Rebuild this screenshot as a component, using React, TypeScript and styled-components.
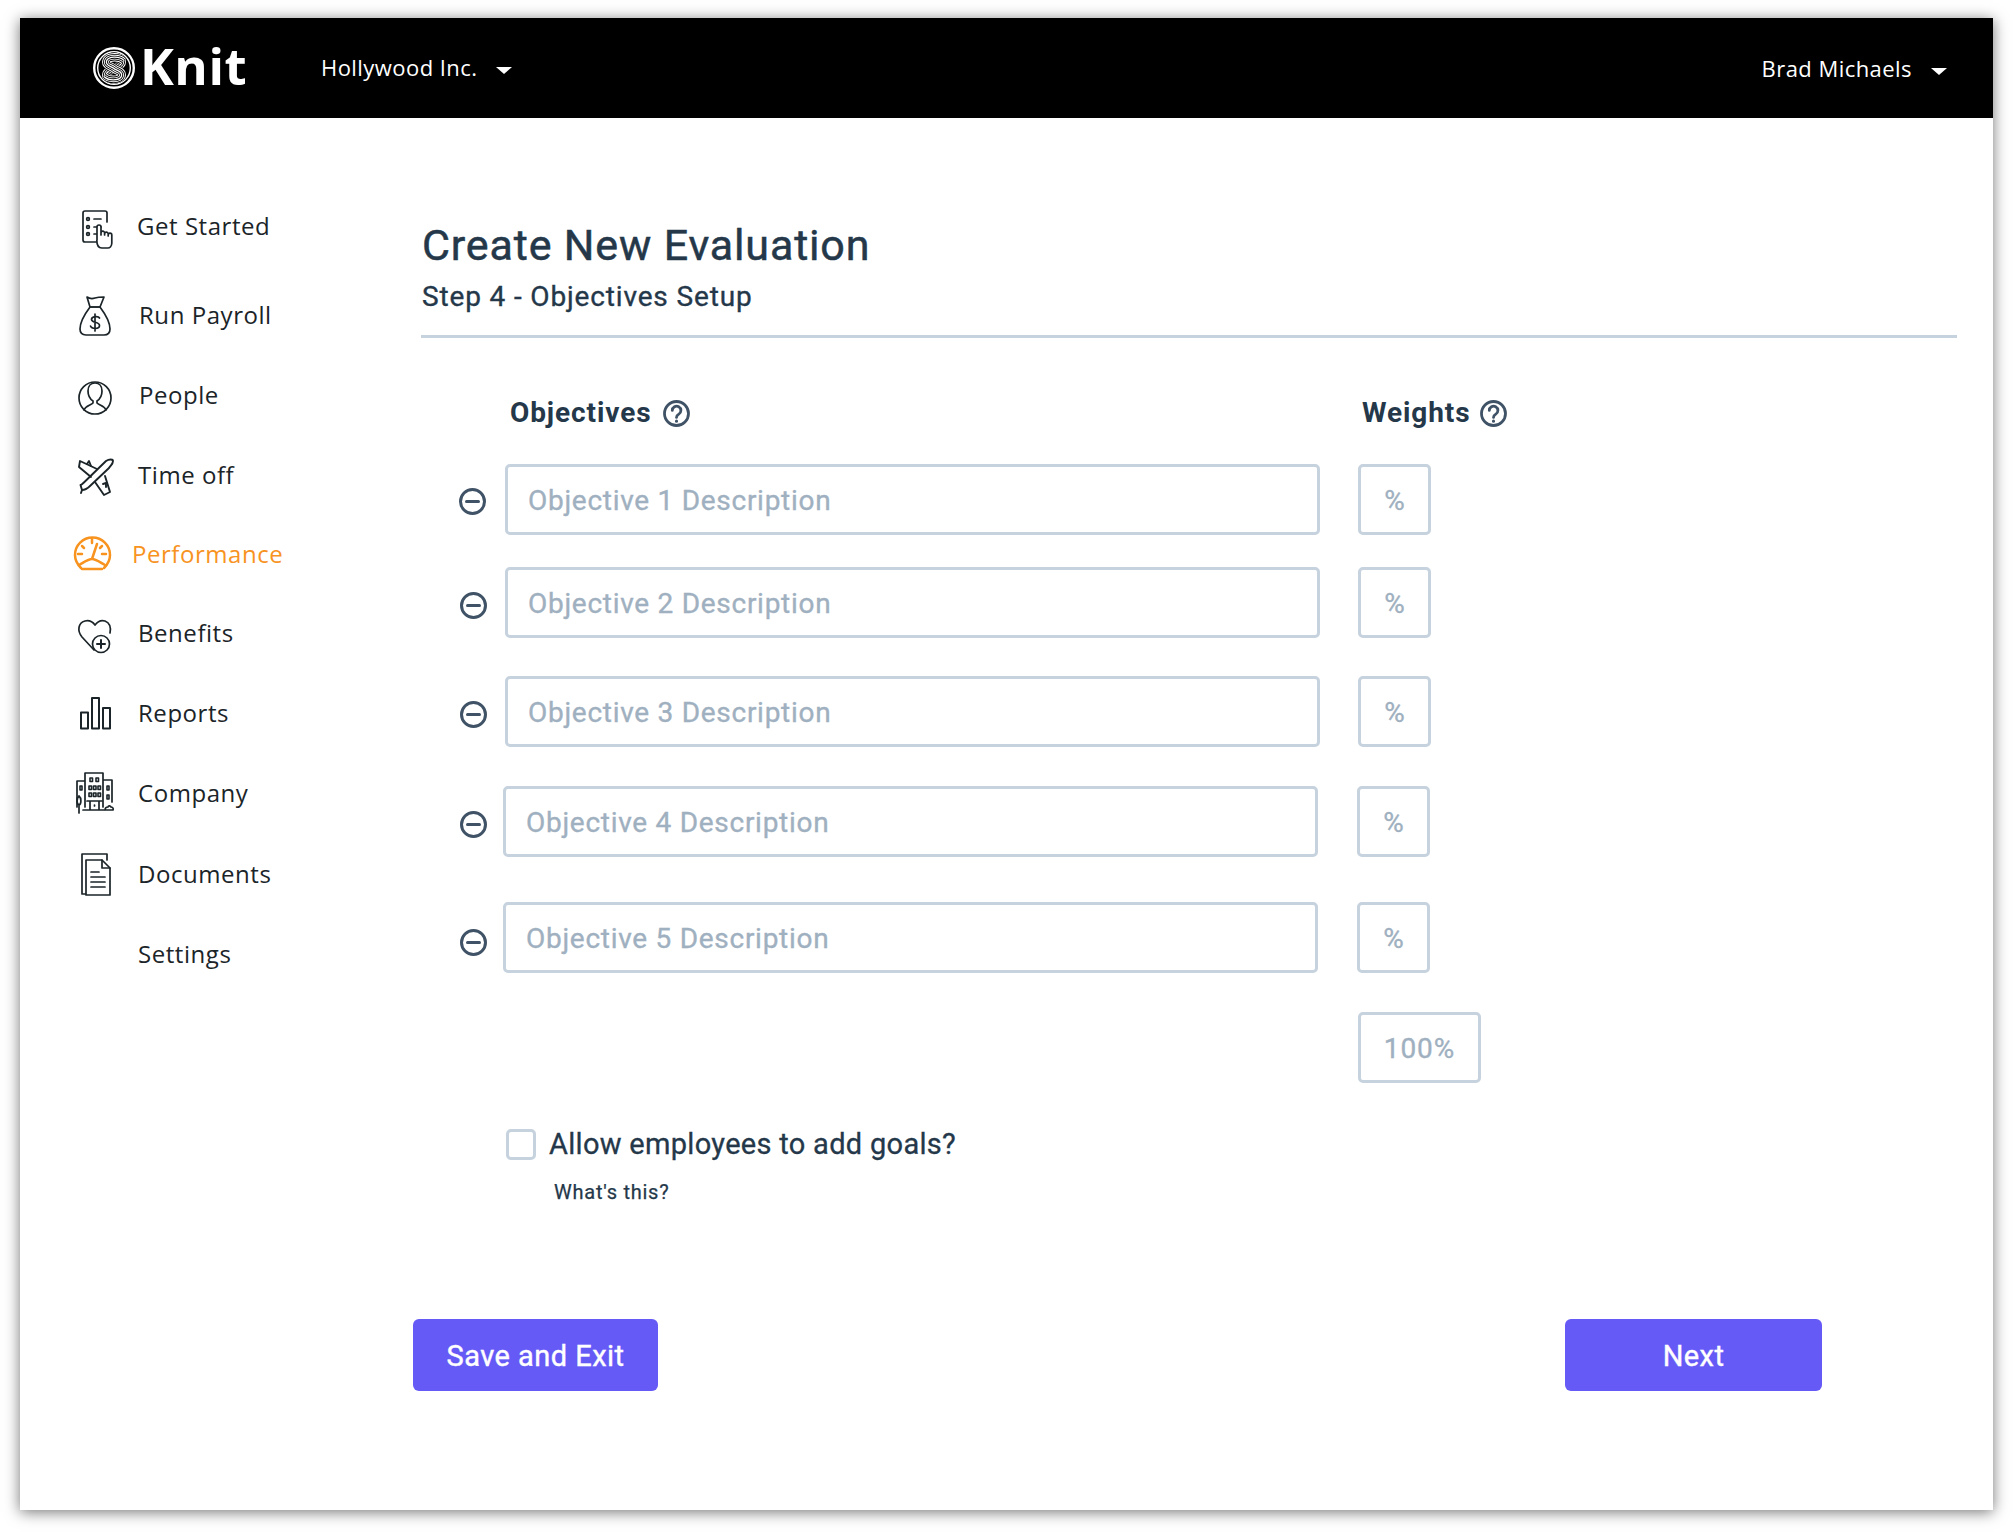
import React from "react";
import styled, { createGlobalStyle } from "styled-components";

const ink = "#1b2428";
const slate = "#24384a";
const line = "#c6d2de";
const hint = "#9fb0c0";
const din = `Roboto, "Liberation Sans", sans-serif`;
const open = `"Open Sans", "Noto Sans", sans-serif`;

const Global = createGlobalStyle`
  html, body { margin: 0; padding: 0; background: #fff; }
  body { font-family: ${din}; }
  * { box-sizing: border-box; }
`;

const Page = styled.div`
  width: 2013px;
  height: 1532px;
  padding: 18px 20px 22px;
  overflow: hidden;
`;
const Win = styled.div`
  height: 1492px;
  background: #fff;
  box-shadow: 0 2px 14px rgba(0, 0, 0, 0.55);
  display: flex;
  flex-direction: column;
`;
const TopBar = styled.header`
  height: 100px;
  flex: none;
  background: #000;
  color: #fff;
  display: flex;
  align-items: center;
  padding: 0 46px 0 73px;
  font-family: ${open};
`;
const Brand = styled.div`
  display: flex;
  align-items: center;
  gap: 5px;
  width: 228px;
`;
const BrandName = styled.span`
  font: 700 51px/1 ${open};
  letter-spacing: 0.5px;
  margin-top: -5px;
`;
const Menu = styled.div<{ $gap: number; $up?: number }>`
  display: flex;
  align-items: center;
  gap: ${(p) => p.$gap}px;
  font-size: 22px;
  letter-spacing: 0.45px;
  margin-bottom: ${(p) => p.$up ?? 0}px;
`;
const Caret = styled.i`
  width: 0;
  height: 0;
  border-left: 8px solid transparent;
  border-right: 8px solid transparent;
  border-top: 7px solid #fff;
  margin-top: 6px;
`;
const Spacer = styled.div`
  flex: 1;
`;
const Body = styled.div`
  flex: 1;
  display: flex;
`;
const Side = styled.nav`
  width: 401px;
  flex: none;
  padding: 84px 0 0 54px;
`;
const NavRow = styled.div<{ $gap: number; $active?: boolean }>`
  height: 48px;
  margin-top: ${(p) => p.$gap}px;
  display: flex;
  align-items: center;
  font: 400 24px/1 ${open};
  letter-spacing: 0.55px;
  color: ${(p) => (p.$active ? "#f7931e" : ink)};
`;
const NavIcon = styled.svg<{ $space: number }>`
  width: 40px;
  height: 48px;
  flex: none;
  margin-right: ${(p) => p.$space}px;
  overflow: visible;
  fill: none;
  stroke: currentColor;
  stroke-width: 1.7;
  stroke-linecap: round;
  stroke-linejoin: round;
`;
const Main = styled.main`
  flex: 1;
  padding: 98px 36px 0 0;
`;
const Title = styled.h1`
  margin: 0;
  padding-left: 1px;
  font: 400 43px/58px ${din};
  -webkit-text-stroke: 0.5px ${slate};
  color: ${slate};
  letter-spacing: 0.85px;
`;
const Sub = styled.h2`
  margin: 5px 0 0;
  padding: 0 0 20px 1px;
  font: 400 28px/36px ${din};
  -webkit-text-stroke: 0.35px ${slate};
  color: ${slate};
  letter-spacing: 0.85px;
  border-bottom: 3px solid ${line};
`;
const Form = styled.div`
  padding-left: 38px;
`;
const HeadRow = styled.div`
  height: 40px;
  margin-top: 55px;
  display: flex;
  align-items: center;
  font: 700 28px/1 ${din};
  letter-spacing: 0.9px;
  color: ${slate};
`;
const HeadCell = styled.div<{ $w: number; $x: number; $gap: number }>`
  width: ${(p) => p.$w}px;
  padding-left: ${(p) => p.$x}px;
  display: flex;
  align-items: center;
  gap: ${(p) => p.$gap}px;
`;
const Row = styled.div<{ $gap: number }>`
  display: flex;
  align-items: center;
  height: 71px;
  margin-top: ${(p) => p.$gap}px;
`;
const Ico = styled.svg`
  width: 27px;
  height: 27px;
  flex: none;
  fill: none;
  stroke: #3f5266;
  stroke-width: 2.8;
  stroke-linecap: round;
`;
const MinusSlot = styled.div<{ $w: number; $left: number; $top: number }>`
  width: ${(p) => p.$w}px;
  flex: none;
  display: flex;
  padding: ${(p) => p.$top}px 0 0 ${(p) => p.$left}px;
`;
const Field = styled.div`
  width: 815px;
  height: 71px;
  flex: none;
  border: 3px solid ${line};
  border-radius: 5px;
  display: flex;
  align-items: center;
  padding: 3px 20px 0;
  font: 400 28px/1 ${din};
  -webkit-text-stroke: 0.35px ${hint};
  letter-spacing: 0.72px;
  color: ${hint};
`;
const Weight = styled.div<{ $w?: number; $gap: number; $wide?: boolean }>`
  width: ${(p) => p.$w ?? 73}px;
  height: 71px;
  flex: none;
  margin-left: ${(p) => p.$gap}px;
  border: 3px solid ${line};
  border-radius: 5px;
  display: flex;
  align-items: center;
  justify-content: center;
  padding-top: 3px;
  font: 400 28px/1 ${din};
  -webkit-text-stroke: 0.35px ${hint};
  letter-spacing: ${(p) => (p.$wide ? "1px" : "0")};
  color: ${hint};
`;
const Check = styled.div`
  display: flex;
  align-items: center;
  gap: 13px;
  margin: 45px 0 0 47px;
  height: 32px;
  font: 400 29px/1 ${din};
  -webkit-text-stroke: 0.3px ${slate};
  letter-spacing: 0.3px;
  color: ${slate};
`;
const Box = styled.span`
  width: 30px;
  height: 31px;
  border: 3px solid ${line};
  border-radius: 5px;
  flex: none;
`;
const Hint = styled.div`
  margin: 20px 0 0 95px;
  font: 400 20px/24px ${din};
  -webkit-text-stroke: 0.25px ${slate};
  color: ${slate};
  letter-spacing: 0.75px;
`;
const Footer = styled.div`
  width: 1409px;
  margin: 115px 0 0 -8px;
  display: flex;
  justify-content: space-between;
`;
const Btn = styled.div<{ $w: number }>`
  width: ${(p) => p.$w}px;
  height: 72px;
  padding-top: 2px;
  border-radius: 6px;
  background: #665af7;
  color: #fff;
  display: flex;
  align-items: center;
  justify-content: center;
  font: 400 29px/1 ${din};
  -webkit-text-stroke: 0.4px #fff;
  letter-spacing: 0.45px;
`;

const knot = "M31 13.500C27 9 15 9 13.500 14c-1.500 5 5 5 7.500 7.500s9 2.500 7.500 7.500C27 34 15 34 11 29.500";
const knotB = "M11 13.500C15 9 27 9 28.500 14c1.500 5-5 5-7.500 7.500s-9 2.500-7.500 7.500C15 34 27 34 31 29.500";
const KnitMark = () => (
  <svg width="42" height="42" viewBox="0 0 42 42" fill="none" stroke="#fff">
    <defs>
      <clipPath id="knit-clip">
        <circle cx="21" cy="21" r="15.500" />
      </clipPath>
    </defs>
    <circle cx="21" cy="21" r="19.800" fill="#000" strokeWidth="2.400" />
    <circle cx="21" cy="21" r="16.300" strokeWidth="1.400" />
    <g clipPath="url(#knit-clip)">
      {[knotB, knot].map((d) => (
        <g key={d}>
          <path d={d} strokeWidth="10" stroke="#000" />
          <path d={d} strokeWidth="8.400" />
          <path d={d} strokeWidth="6.600" stroke="#000" />
          <path d={d} strokeWidth="4.800" />
          <path d={d} strokeWidth="3" stroke="#000" />
          <path d={d} strokeWidth="1.300" />
        </g>
      ))}
    </g>
  </svg>
);

const HelpIcon = () => (
  <Ico viewBox="0 0 27 27">
    <circle cx="13.5" cy="13.5" r="12" />
    <path d="M9.3 10.4a4.3 4.3 0 1 1 6.5 3.7c-1.5.9-2.3 1.6-2.3 3.3" />
    <path d="M13.5 21v.2" strokeWidth="3" />
  </Ico>
);
const MinusIcon = () => (
  <Ico viewBox="0 0 27 27">
    <circle cx="13.5" cy="13.5" r="12" strokeWidth="3" />
    <path d="M7.5 13.5h12" strokeWidth="3" />
  </Ico>
);

const nav: { label: string; gap: number; space: number; color?: boolean; icon?: React.ReactNode }[] = [
  {
    label: "Get Started",
    gap: 0,
    space: 23,
    icon: (
      <>
        <path d="M24 40H11a2 2 0 0 1-2-2V11a2 2 0 0 1 2-2h20a2 2 0 0 1 2 2v9" />
        <circle cx="14" cy="17" r="1.4" />
        <circle cx="14" cy="25" r="1.4" />
        <circle cx="14" cy="32" r="1.4" />
        <path d="M20 17h7M20 25h7M20 32h4" />
        <path
          fill="#fff"
          d="M23 38v-13a2 2 0 0 1 4 0v8v-2a1.8 1.8 0 0 1 3.6 0v2-1a1.8 1.8 0 0 1 3.6 0v2-1a1.8 1.8 0 0 1 3.6 0v8c0 3-2 5-4 5h-6c-3 0-5-3-5-8z"
        />
      </>
    ),
  },
  {
    label: "Run Payroll",
    gap: 41,
    space: 25,
    icon: (
      <>
        <path d="M13 6c3 2 5 2 8 1s5-1 9-1l-4 10H16z" />
        <path d="M16 16h10c3 4 10 13 10 22 0 4-2 6-6 6H12c-4 0-6-2-6-6 0-9 7-18 10-22z" />
        <path d="M25.5 27c-1-2-8-2-8 1.500s8 2 8 6-8 3.500-9 .5M21 23v17" />
      </>
    ),
  },
  {
    label: "People",
    gap: 32,
    space: 25,
    icon: (
      <>
        <circle cx="21" cy="27" r="16" />
        <path d="M10 39c1-4 7-5 9-7v-2c-3-2-5-6-5-10 0-5 3-8 7-8s7 3 7 8c0 4-2 8-5 10v2c2 2 8 3 9 7" />
      </>
    ),
  },
  {
    label: "Time off",
    gap: 32,
    space: 24,
    icon: (
      <g strokeWidth="1.900">
        <path d="M32 10c3-2 7-2 7 0 0 3-2 4-4 7L16 35c-3 3-6 4-8 4l-1.500-5c1 0 3-2 6-5z" />
        <path d="M23 18 6 10l-1 6 12 10M31 25l5 16-6 3-9-13" />
        <path d="M13 13l2-3 2 5M29 33l3-1 0 4M8 39l-1 3" />
      </g>
    ),
  },
  {
    label: "Performance",
    gap: 31,
    space: 18,
    color: true,
    icon: (
      <g strokeWidth="2.500">
        <path d="M7 38c-4-4-6-8-6-13a17.500 17.500 0 0 1 35 0c0 5-2 9-6 13" />
        <path d="M5 35c4-2 9-6 13-6s9 4 13 6M8 39h20M18 29l5-15M18 9v4M8 16l2 2M28 16l-2 2M4 24h4M32 24h-4" />
      </g>
    ),
  },
  {
    label: "Benefits",
    gap: 31,
    space: 24,
    icon: (
      <>
        <path d="M20 41 8 28c-5-6-4-14 3-16 4-1 7 0 10 4 3-4 7-5 10-4 5 2 6 7 5 12" />
        <circle cx="27" cy="35" r="8.500" />
        <path d="M27 31v8M23 35h8" strokeWidth="2" />
      </>
    ),
  },
  {
    label: "Reports",
    gap: 32,
    space: 24,
    icon: (
      <path strokeLinecap="butt" d="M7 23.500h7v16H7zM18 9h7v30.500h-7zM29 19h7v20.500h-7z" strokeWidth="2" />
    ),
  },
  {
    label: "Company",
    gap: 32,
    space: 24,
    icon: (
      <>
        <path d="M11 38V4h18v34M3 38V12h8M29 11h9v22" />
        <path
          strokeWidth="1.6"
          d="M16 9h2.500v3.500H16zM22 9h2.500v3.500H22zM15 17h2.500v3.500H15zM19.500 17h2.500v3.500h-2.500zM24 17h2.500v3.500H24zM15 24h2.500v3.500H15zM19.500 24h2.500v3.500h-2.500zM24 24h2.500v3.500H24zM6 17h2v4H6zM33 17h2v4h-2zM33 26h2v4h-2z"
        />
        <path d="M13 32h15M16 32v9M25 32v9M20.500 36v1M9 41h21" />
        <path d="M5 44v-8M5 27c-2.500 2-2.500 8 0 9 2.500-1 2.500-7 0-9z" />
        <path d="M31 41h8c1-2-1-3-2-3-1-2-3-1-3 0-2 0-3 1-3 3z" />
      </>
    ),
  },
  {
    label: "Documents",
    gap: 33,
    space: 24,
    icon: (
      <>
        <path d="M12 44H8V4h25v6" />
        <path fill="#fff" d="M12 10h16l8 8v27H12z" />
        <path d="M28 10v8h8M17 22h8M17 27h14M17 32h14M17 37h14" />
      </>
    ),
  },
  { label: "Settings", gap: 32, space: 24 },
];

const rows = [
  { n: 1, gap: 31, w: 46, left: 0, top: 4, wgap: 38 },
  { n: 2, gap: 32, w: 46, left: 1, top: 6, wgap: 38 },
  { n: 3, gap: 38, w: 46, left: 1, top: 6, wgap: 38 },
  { n: 4, gap: 39, w: 44, left: 1, top: 6, wgap: 39 },
  { n: 5, gap: 45, w: 44, left: 1, top: 10, wgap: 39 },
];

export default function App() {
  return (
    <Page>
      <Global />
      <Win>
        <TopBar>
          <Brand>
            <KnitMark />
            <BrandName>Knit</BrandName>
          </Brand>
          <Menu $gap={18} $up={2}>
            Hollywood Inc.
            <Caret />
          </Menu>
          <Spacer />
          <Menu $gap={19}>
            Brad Michaels
            <Caret />
          </Menu>
        </TopBar>
        <Body>
          <Side>
            {nav.map((n) => (
              <NavRow key={n.label} $gap={n.gap} $active={n.color}>
                <NavIcon $space={n.space} viewBox="0 0 40 48">
                  {n.icon}
                </NavIcon>
                {n.label}
              </NavRow>
            ))}
          </Side>
          <Main>
            <Title>Create New Evaluation</Title>
            <Sub>Step 4 - Objectives Setup</Sub>
            <Form>
              <HeadRow>
                <HeadCell $w={899} $x={51} $gap={12}>
                  Objectives
                  <HelpIcon />
                </HeadCell>
                <HeadCell $w={300} $x={4} $gap={10}>
                  Weights
                  <HelpIcon />
                </HeadCell>
              </HeadRow>
              {rows.map((r) => (
                <Row key={r.n} $gap={r.gap}>
                  <MinusSlot $w={r.w} $left={r.left} $top={r.top}>
                    <MinusIcon />
                  </MinusSlot>
                  <Field>Objective {r.n} Description</Field>
                  <Weight $gap={r.wgap}>%</Weight>
                </Row>
              ))}
              <Row $gap={39}>
                <Weight $gap={899} $w={123} $wide>
                  100%
                </Weight>
              </Row>
              <Check>
                <Box />
                Allow employees to add goals?
              </Check>
              <Hint>What's this?</Hint>
            </Form>
            <Footer>
              <Btn $w={245}>Save and Exit</Btn>
              <Btn $w={257}>Next</Btn>
            </Footer>
          </Main>
        </Body>
      </Win>
    </Page>
  );
}
